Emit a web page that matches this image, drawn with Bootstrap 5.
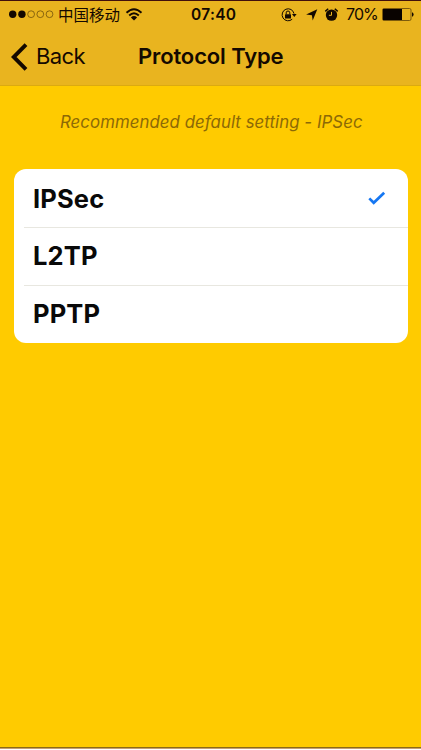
<!DOCTYPE html>
<html lang="en">
<head>
<meta charset="utf-8">
<meta name="viewport" content="width=device-width, initial-scale=1">
<title>Protocol Type</title>
<link href="https://cdn.jsdelivr.net/npm/bootstrap@5.3.0/dist/css/bootstrap.min.css" rel="stylesheet">
<style>
body{background:#ffcb00;color:#140900;font-family:Inter,"Noto Sans CJK SC",sans-serif;height:750px;overflow:hidden}
.top-area{height:86px;background:#e9b41f;border-top:1px solid #42100b;border-bottom:1px solid #dcaa10}
.status-bar{height:27px;padding-left:9px;font-size:15px;line-height:27px;white-space:nowrap}
.status-bar svg,.title-bar svg{display:block;flex:none}
.carrier{margin-left:4px;width:63px;font-size:15.5px;font-family:"Noto Sans CJK SC",sans-serif}
.clock{margin-left:48px;width:90px;font-size:15.5px;font-weight:600;letter-spacing:.3px}
.arrow-icon{margin-left:9px}
.alarm-icon{margin-left:6px}
.percent{margin-left:7px;width:35.5px;font-size:16px;letter-spacing:-.9px}
.title-bar{height:57px;font-size:22px;line-height:57px;padding-left:11px}
.back-label{width:102px;margin-left:8px;letter-spacing:-.6px}
.page-title{font-size:22px;font-weight:600;letter-spacing:-.13px;line-height:57px;white-space:nowrap}
.hint{margin-top:23px;height:26px;line-height:26px;padding-left:60px;font-size:16.8px;font-style:italic;letter-spacing:.07px;color:#8c6906;white-space:nowrap}
.options{margin:34.3px 13.5px 0 13.6px;--bs-list-group-border-radius:12px;background:#fff;border-radius:12px;height:173.4px}
.options .list-group-item{height:57.8px;border:0;padding:0 22px 0 19.4px;background:transparent;color:#090909;font-size:25.5px;font-weight:700;letter-spacing:.15px;line-height:57px}
.options .list-group-item+.list-group-item{background:linear-gradient(#e8e7e0,#e8e7e0) 10px 0/100% 1px no-repeat}
.bottom-edge{height:3px;background:linear-gradient(#8b6c16 0 1px,#c6a071 1px 2px,#fff 2px)}
</style>
</head>
<body class="d-flex flex-column">
<header class="top-area">
<div class="status-bar d-flex align-items-center">
<svg width="45" height="12" viewBox="0 0 45 12"><g fill="#140900"><circle cx="3.7" cy="5.2" r="3.7"/><circle cx="12.9" cy="5.2" r="3.7"/></g><g fill="none" stroke="#70510a" stroke-width=".8"><circle cx="22.1" cy="5.2" r="3.4"/><circle cx="31.3" cy="5.2" r="3.4"/><circle cx="40.5" cy="5.2" r="3.4"/></g></svg>
<span class="carrier">中国移动</span>
<svg class="ms-1" width="18" height="14" viewBox="0 0 18 14"><g fill="none" stroke="#140900" stroke-width="1.9"><path d="M1.5 4.7Q9-2.4 16.5 4.7M4.2 7.5Q9 2.9 13.8 7.5"/></g><path d="M5.9 9.4Q9 6.5 12.1 9.4L9 12.5Z" fill="#140900"/></svg>
<span class="clock">07:40</span>
<svg width="16" height="14" viewBox="0 0 16 14"><path d="M11.2 11.2A6 6 0 1 1 13 5.6" fill="none" stroke="#140900" stroke-width="1"/><path d="M11 6.1h4.6L13.3 9Z" fill="#140900"/><rect x="4" y="6.2" width="6" height="4.2" rx=".5" fill="#140900"/><path d="M5.2 6.3V4.8a1.8 1.8 0 0 1 3.6 0v1.5" fill="none" stroke="#140900"/></svg>
<svg class="arrow-icon" width="12" height="12" viewBox="0 0 12 12"><path d="M11.3.3 6.7 11.6 5.9 6.2.1 5.6Z" fill="#140900"/></svg>
<svg class="alarm-icon" width="15" height="14" viewBox="0 0 15 14"><circle cx="7.5" cy="7.1" r="5.7" fill="#140900"/><path d="M1.3 3.4 4.2.8M13.7 3.4 10.8.8" stroke="#140900" stroke-width="1.5"/><path d="M7.5 3.9v3.4H4.9" fill="none" stroke="#e9b41f" stroke-width="1"/></svg>
<span class="percent">70%</span>
<svg width="32" height="13" viewBox="0 0 32 13"><rect x=".5" y=".5" width="28.5" height="12" rx="1.5" fill="none" stroke="#70510a" stroke-width=".9"/><rect x="1" y="1" width="19" height="11" fill="#090300"/><path d="M30 4.3q1.6.4 1.6 2.2T30 8.7Z" fill="#140900"/></svg>
</div>
<div class="title-bar d-flex align-items-center">
<svg width="17" height="28" viewBox="0 0 17 28"><path d="M15 1.7 2.7 14 15 26.3" fill="none" stroke="#140900" stroke-width="3.9"/></svg>
<span class="back-label">Back</span>
<h1 class="page-title mb-0">Protocol Type</h1>
</div>
</header>
<main class="flex-grow-1">
<p class="hint mb-0">Recommended default setting - IPSec</p>
<div class="options list-group">
<div class="list-group-item d-flex justify-content-between align-items-center"><span>IPSec</span><svg width="18" height="14" viewBox="0 0 18 14"><path d="m1.3 7.4 4.4 4.4L16.2 1.7" fill="none" stroke="#1677f2" stroke-width="2.7"/></svg></div>
<div class="list-group-item">L2TP</div>
<div class="list-group-item">PPTP</div>
</div>
</main>
<div class="bottom-edge"></div>
<script src="https://cdn.jsdelivr.net/npm/bootstrap@5.3.0/dist/js/bootstrap.bundle.min.js"></script>
</body>
</html>
